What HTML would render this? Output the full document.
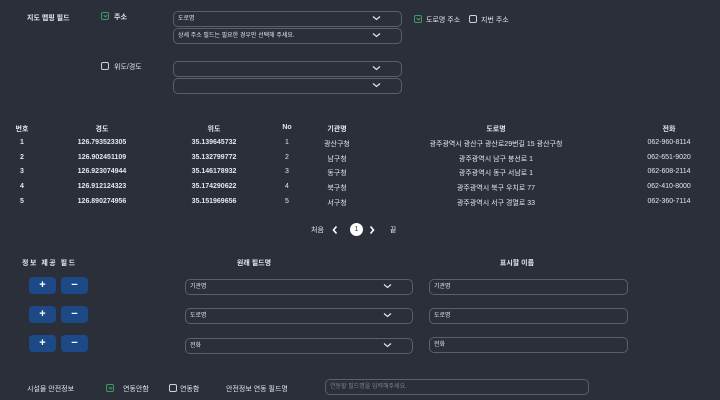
<!DOCTYPE html>
<html><head><meta charset="utf-8"><style>
*{margin:0;padding:0;box-sizing:border-box}
body{width:720px;height:400px;background:#2b2f3a;color:#e4e6ea;font-family:"Liberation Sans","Noto Sans CJK KR",sans-serif;font-size:7px;position:relative;overflow:hidden}
.a{position:absolute;white-space:nowrap}
.b{font-weight:bold}
.sel,.inp{position:absolute;border:1px solid #5a5f6b;border-radius:5px;height:16px;padding-left:4px;line-height:14px;font-size:6px}
.chev{position:absolute;right:20px;top:3px;width:9px;height:6px}
.cb{position:absolute;width:8px;height:8px;border:1px solid #cfd2d8;border-radius:2px}
.cb.g{border-color:#3d9a63}
.cb.g:after{content:"";position:absolute;left:2px;top:1px;width:2px;height:2px;border-right:1px solid #3d9a63;border-bottom:1px solid #3d9a63;transform:rotate(45deg)}
.btn{position:absolute;width:27px;height:17px;background:#1d4a86;border-radius:4px;color:#fff;font-size:11px;font-weight:bold;text-align:center;line-height:16px}
.c{transform:translateX(-50%)}
</style></head><body>
<svg width="0" height="0" style="position:absolute"><defs><symbol id="cv" viewBox="0 0 9 6"><path d="M1 1.5L4.5 4.5L8 1.5" stroke="#e4e6ea" stroke-width="1.2" fill="none"/></symbol></defs></svg>

<div class="a b" style="left:27px;top:13px">지도 맵핑 필드</div>
<div class="cb g" style="left:101px;top:12px"></div><div class="a b" style="left:114px;top:12px">주소</div>
<div class="sel" style="left:173px;top:11px;width:229px;height:16px">도로명<svg class="chev"><use href="#cv"/></svg></div>
<div class="sel" style="left:173px;top:28px;width:229px;height:16px">상세 주소 필드는 필요한 경우만 선택해 주세요.<svg class="chev"><use href="#cv"/></svg></div>
<div class="cb g" style="left:414px;top:15px"></div><div class="a" style="left:426px;top:15px">도로명 주소</div>
<div class="cb" style="left:469px;top:15px"></div><div class="a" style="left:481px;top:15px">지번 주소</div>
<div class="cb" style="left:101px;top:62px"></div><div class="a" style="left:114px;top:62px">위도/경도</div>
<div class="sel" style="left:173px;top:61px;width:229px"><svg class="chev"><use href="#cv"/></svg></div>
<div class="sel" style="left:173px;top:78px;width:229px"><svg class="chev"><use href="#cv"/></svg></div>

<div class="a b c" style="left:22px;top:124px">번호</div>
<div class="a b c" style="left:102px;top:124px">경도</div>
<div class="a b c" style="left:214px;top:124px">위도</div>
<div class="a b c" style="left:287px;top:124px">No</div>
<div class="a b c" style="left:337px;top:124px">기관명</div>
<div class="a b c" style="left:496px;top:124px">도로명</div>
<div class="a b c" style="left:669px;top:124px">전화</div>

<div class="a b c" style="left:22px;top:139px">1</div><div class="a b c" style="left:102px;top:139px">126.793523305</div><div class="a b c" style="left:214px;top:139px">35.139645732</div><div class="a c" style="left:287px;top:139px">1</div><div class="a c" style="left:337px;top:139px">광산구청</div><div class="a c" style="left:496px;top:139px">광주광역시 광산구 광산로29번길 15 광산구청</div><div class="a c" style="left:669px;top:139px">062-960-8114</div>
<div class="a b c" style="left:22px;top:154px">2</div><div class="a b c" style="left:102px;top:154px">126.902451109</div><div class="a b c" style="left:214px;top:154px">35.132799772</div><div class="a c" style="left:287px;top:154px">2</div><div class="a c" style="left:337px;top:154px">남구청</div><div class="a c" style="left:496px;top:154px">광주광역시 남구 봉선로 1</div><div class="a c" style="left:669px;top:154px">062-651-9020</div>
<div class="a b c" style="left:22px;top:168px">3</div><div class="a b c" style="left:102px;top:168px">126.923074944</div><div class="a b c" style="left:214px;top:168px">35.146178932</div><div class="a c" style="left:287px;top:168px">3</div><div class="a c" style="left:337px;top:168px">동구청</div><div class="a c" style="left:496px;top:168px">광주광역시 동구 서남로 1</div><div class="a c" style="left:669px;top:168px">062-608-2114</div>
<div class="a b c" style="left:22px;top:183px">4</div><div class="a b c" style="left:102px;top:183px">126.912124323</div><div class="a b c" style="left:214px;top:183px">35.174290622</div><div class="a c" style="left:287px;top:183px">4</div><div class="a c" style="left:337px;top:183px">북구청</div><div class="a c" style="left:496px;top:183px">광주광역시 북구 우치로 77</div><div class="a c" style="left:669px;top:183px">062-410-8000</div>
<div class="a b c" style="left:22px;top:198px">5</div><div class="a b c" style="left:102px;top:198px">126.890274956</div><div class="a b c" style="left:214px;top:198px">35.151969656</div><div class="a c" style="left:287px;top:198px">5</div><div class="a c" style="left:337px;top:198px">서구청</div><div class="a c" style="left:496px;top:198px">광주광역시 서구 경열로 33</div><div class="a c" style="left:669px;top:198px">062-360-7114</div>

<div class="a" style="left:311px;top:225px">처음</div>
<svg class="a" style="left:331px;top:225px" width="8" height="10"><path d="M5.5 1.5L2.5 5L5.5 8.5" stroke="#fff" stroke-width="1.6" fill="none"/></svg>
<div class="a" style="left:350px;top:223px;width:13px;height:13px;border-radius:50%;background:#fff;color:#333;text-align:center;line-height:13px;font-size:7px">1</div>
<svg class="a" style="left:368px;top:225px" width="8" height="10"><path d="M2.5 1.5L5.5 5L2.5 8.5" stroke="#fff" stroke-width="1.6" fill="none"/></svg>
<div class="a" style="left:390px;top:225px">끝</div>

<div class="a b" style="left:22px;top:258px;letter-spacing:1.5px">정보 제공 필드</div>
<div class="a b c" style="left:254px;top:258px">원래 필드명</div>
<div class="a b c" style="left:517px;top:258px">표시할 이름</div>

<div class="btn" style="left:29px;top:277px">+</div><div class="btn" style="left:61px;top:277px">−</div>
<div class="btn" style="left:29px;top:306px">+</div><div class="btn" style="left:61px;top:306px">−</div>
<div class="btn" style="left:29px;top:335px">+</div><div class="btn" style="left:61px;top:335px">−</div>

<div class="sel" style="left:185px;top:279px;width:228px">기관명<svg class="chev"><use href="#cv"/></svg></div>
<div class="sel" style="left:185px;top:308px;width:228px">도로명<svg class="chev"><use href="#cv"/></svg></div>
<div class="sel" style="left:185px;top:338px;width:228px">전화<svg class="chev"><use href="#cv"/></svg></div>
<div class="inp" style="left:429px;top:279px;width:199px">기관명</div>
<div class="inp" style="left:429px;top:308px;width:199px">도로명</div>
<div class="inp" style="left:429px;top:337px;width:199px">전화</div>

<div class="a" style="left:27px;top:384px">시설물 안전정보</div>
<div class="cb g" style="left:106px;top:384px"></div><div class="a" style="left:123px;top:384px">연동안함</div>
<div class="cb" style="left:169px;top:384px"></div><div class="a" style="left:180px;top:384px">연동함</div>
<div class="a" style="left:226px;top:384px">안전정보 연동 필드명</div>
<div class="inp" style="left:325px;top:379px;width:264px;color:#7d818b">연동할 필드명을 입력해주세요.</div>
</body></html>
